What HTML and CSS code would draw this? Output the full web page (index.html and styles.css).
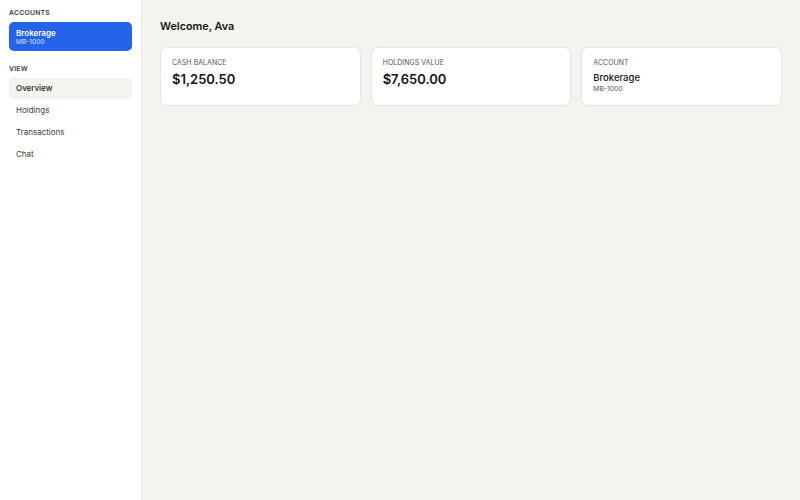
FILE: index.html
```html
<!DOCTYPE html>
<html>
<head>
<meta charset="utf-8">
<link rel="stylesheet" href="styles.css">
</head>
<body>
<div class="app">
  <aside class="sidebar">
    <div class="section-label">Accounts</div>
    <div class="account active">
      <div class="account-name">Brokerage</div>
      <div class="account-id">MB-1000</div>
    </div>
    <div class="section-label view-label">View</div>
    <nav class="nav">
      <div class="nav-item selected">Overview</div>
      <div class="nav-item">Holdings</div>
      <div class="nav-item">Transactions</div>
      <div class="nav-item">Chat</div>
    </nav>
  </aside>
  <main class="main">
    <h1 class="title">Welcome, Ava</h1>
    <div class="cards">
      <div class="card">
        <div class="card-label">Cash balance</div>
        <div class="card-value">$1,250.50</div>
      </div>
      <div class="card">
        <div class="card-label">Holdings value</div>
        <div class="card-value">$7,650.00</div>
      </div>
      <div class="card">
        <div class="card-label">Account</div>
        <div class="card-name">Brokerage</div>
        <div class="card-sub">MB-1000</div>
      </div>
    </div>
  </main>
</div>
</body>
</html>
```
FILE: styles.css
```css
* { box-sizing: border-box; }
html, body { margin: 0; padding: 0; height: 100%; }
body {
  font-family: Inter, "Noto Sans", sans-serif;
  color: #1c1c1a;
  background: #f3f3ef;
}
.app {
  display: flex;
  height: 500px;
}
.sidebar {
  width: 142px;
  flex: none;
  background: #ffffff;
  border-right: 1px solid #e6e6e0;
  padding: 8px 9px;
}
.section-label {
  font-size: 6.8px;
  font-weight: 600;
  letter-spacing: 0.25px;
  text-transform: uppercase;
  color: #3a3a36;
  line-height: 10px;
}
.view-label { margin-top: 13px; }
.account {
  margin-top: 4px;
  background: #2563eb;
  color: #fff;
  border-radius: 5px;
  padding: 6px 7px 5px;
  height: 29px;
}
.account-name {
  font-size: 8px;
  font-weight: 600;
  line-height: 10px;
}
.account-id {
  font-size: 6.6px;
  line-height: 9px;
  color: #dbe6ff;
}
.nav {
  margin-top: 4px;
  display: flex;
  flex-direction: column;
  gap: 1px;
}
.nav-item {
  font-size: 8px;
  line-height: 21px;
  padding: 0 7px;
  color: #3a3a36;
  border-radius: 4px;
}
.nav-item.selected {
  background: #f3f3ef;
  color: #1c1c1a;
  font-weight: 500;
}
.main {
  flex: 1;
  padding: 20px 18px;
}
.title {
  margin: 0;
  font-size: 10.8px;
  font-weight: 600;
  line-height: 13px;
  color: #151513;
}
.cards {
  margin-top: 14px;
  display: grid;
  grid-template-columns: repeat(3, 1fr);
  gap: 10px;
}
.card {
  background: #fff;
  border: 1px solid #e6e6e0;
  border-radius: 7px;
  padding: 10px 11px;
  height: 59px;
}
.card-label {
  font-size: 6.9px;
  letter-spacing: 0.1px;
  text-transform: uppercase;
  color: #55554f;
  line-height: 10px;
}
.card-value {
  margin-top: 2px;
  font-size: 13px;
  font-weight: 600;
  line-height: 18px;
  color: #151513;
}
.card-name {
  margin-top: 3px;
  font-size: 9.5px;
  font-weight: 500;
  line-height: 13px;
  color: #151513;
}
.card-sub {
  font-size: 6.8px;
  color: #55554f;
  line-height: 10px;
}
```
